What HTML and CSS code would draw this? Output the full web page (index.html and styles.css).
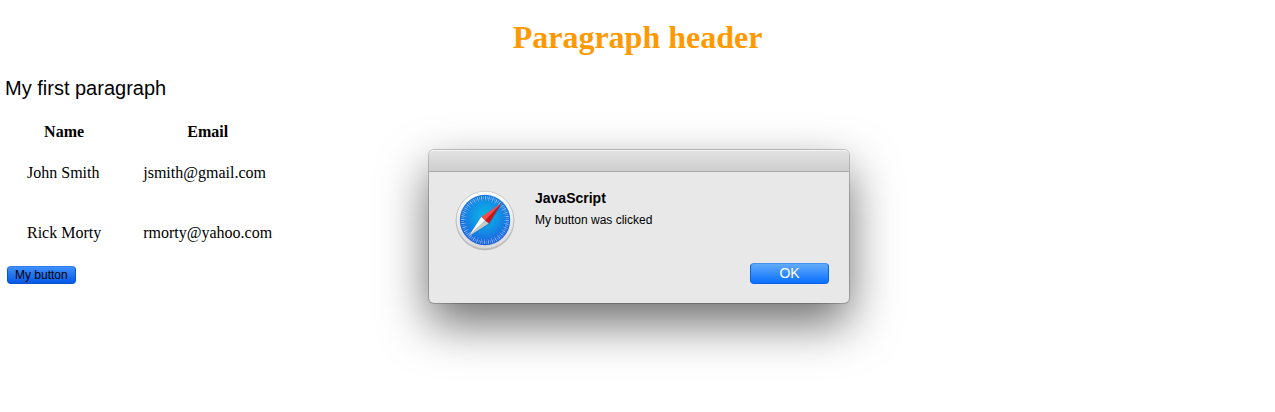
FILE: index.html
```html
<!DOCTYPE html>
<html lang="en">
<head>
<meta charset="utf-8">
<title>Paragraph header</title>
<link rel="stylesheet" href="styles.css">
</head>
<body>
<main class="page">
  <h1 class="title">Paragraph header</h1>
  <p class="intro">My first paragraph</p>
  <table class="people">
    <thead>
      <tr><th scope="col">Name</th><th scope="col">Email</th></tr>
    </thead>
    <tbody>
      <tr><td>John Smith</td><td>jsmith@gmail.com</td></tr>
      <tr><td>Rick Morty</td><td>rmorty@yahoo.com</td></tr>
    </tbody>
  </table>
  <button class="page-button" type="button">My button</button>
</main>
<div class="overlay">
  <section class="alert" role="alertdialog" aria-labelledby="alert-title" aria-describedby="alert-text">
    <div class="alert-bar"></div>
    <div class="alert-body">
      <svg class="alert-icon" viewBox="0 0 64 64" aria-hidden="true">
        <defs>
          <linearGradient id="rim" x1="0" y1="0" x2="0" y2="1">
            <stop offset="0" stop-color="#ffffff"/><stop offset="1" stop-color="#d8d8d8"/>
          </linearGradient>
          <radialGradient id="face" cx=".5" cy=".42" r=".56">
            <stop offset="0" stop-color="#06b8e6"/><stop offset=".5" stop-color="#1292e4"/><stop offset="1" stop-color="#1960e2"/>
          </radialGradient>
        </defs>
        <circle cx="32" cy="32.8" r="29.4" fill="#000" opacity=".2"/>
        <circle cx="32" cy="32" r="28.8" fill="url(#rim)" stroke="#b9b9b9" stroke-width=".6"/>
        <circle cx="32" cy="32" r="25.2" fill="url(#face)"/>
        <circle cx="32" cy="32" r="22.4" fill="none" stroke="#fff" stroke-opacity=".45" stroke-width="3" stroke-dasharray="1 2" pathLength="216"/>
        <circle cx="32" cy="32" r="21.4" fill="none" stroke="#fff" stroke-opacity=".4" stroke-width="5" stroke-dasharray="1 5" pathLength="216"/>
        <path d="M49.5 15 36.5 36 15.5 49Z" fill="#063f91" opacity=".35"/>
        <path d="M48.6 15 28.2 29 32 32.4Z" fill="#fb4a43"/>
        <path d="M48.6 15 35.8 35.4 32 32.4Z" fill="#cf1218"/>
        <path d="M15.5 48.6 28.2 29 32 32.4Z" fill="#ffffff"/>
        <path d="M15.5 48.6 35.8 35.4 32 32.4Z" fill="#c9c9c5"/>
      </svg>
      <div class="alert-content">
        <h2 class="alert-title" id="alert-title">JavaScript</h2>
        <p class="alert-text" id="alert-text">My button was clicked</p>
        <button class="alert-ok" type="button">OK</button>
      </div>
    </div>
  </section>
</div>
</body>
</html>
```
FILE: styles.css
```css
body {
  margin: 0;
  background: #fff;
  color: #000;
  font: 16px/18px "Liberation Serif", "Times New Roman", serif;
}

.page {
  padding: 18px 5px;
}

.title {
  margin: 0 0 20px;
  color: #ff9900;
  font-size: 32px;
  line-height: 38px;
  text-align: center;
}

.intro {
  margin: 0 0 20px;
  font: 20px/24px "Liberation Sans", Arial, sans-serif;
}

.people {
  border-spacing: 2px;
}

.people th {
  padding: 1px;
}

.people td {
  padding: 20px;
}

.page-button {
  display: block;
  margin: 2px;
  padding: 0 7px;
  border: 1px solid #0a56d0;
  border-top-color: #2f7df0;
  border-radius: 4px;
  background: linear-gradient(#3f8ffc, #0759e6);
  color: #000;
  font: 12px/16px "Liberation Sans", Arial, sans-serif;
}

.overlay {
  position: absolute;
  inset: 0;
  display: flex;
  align-items: flex-start;
  justify-content: center;
  padding: 150px 0 0 3px;
  overflow: hidden;
}

.alert {
  width: 420px;
  border-radius: 5px;
  background: #e8e8e8;
  box-shadow: 0 0 0 1px rgba(0, 0, 0, 0.2), 0 20px 48px rgba(0, 0, 0, 0.58);
  font-family: "Liberation Sans", Arial, sans-serif;
}

.alert-bar {
  height: 20px;
  border-top: 1px solid #f4f4f4;
  border-bottom: 1px solid #a9a9a9;
  border-radius: 5px 5px 0 0;
  background: linear-gradient(#e2e2e2, #cecece);
}

.alert-body {
  display: flex;
  gap: 18px;
  padding: 16px 20px 19px 24px;
}

.alert-icon {
  flex: none;
  width: 64px;
  height: 64px;
}

.alert-content {
  display: flex;
  flex: 1;
  flex-direction: column;
}

.alert-title {
  margin: 2px 0 6px;
  font-size: 14px;
  line-height: 16px;
}

.alert-text {
  margin: 0 0 35px;
  font-size: 12px;
  line-height: 16px;
}

.alert-ok {
  align-self: flex-end;
  width: 79px;
  padding: 0;
  border: 1px solid #0a62ea;
  border-top-color: #4492ee;
  border-radius: 4px;
  background: linear-gradient(#62abfa, #0a70ff);
  color: #fff;
  font: 14px/19px "Liberation Sans", Arial, sans-serif;
}
```
